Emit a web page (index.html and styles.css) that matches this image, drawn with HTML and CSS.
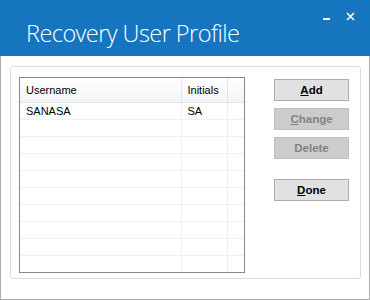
FILE: index.html
```html
<!DOCTYPE html>
<html lang="en">
<head>
  <meta charset="UTF-8" />
  <title>Recovery User Profile</title>
  <link rel="stylesheet" href="styles.css">
</head>
<body>
  <div class="window">
    <div class="titlebar">
      <h1>Recovery User Profile</h1>
      <div class="controls">
        <span class="ctl-min"></span>
        <svg class="ctl-close" width="9" height="9" viewBox="0 0 9 9">
          <path d="M1 1 L8 8 M8 1 L1 8" stroke="#fff" stroke-width="1.6" />
        </svg>
      </div>
    </div>

    <div class="content">
      <div class="groupbox">
        <div class="listview">
          <table>
            <thead>
              <tr>
                <th class="c-name">Username</th>
                <th class="c-init">Initials</th>
                <th class="c-pad"></th>
              </tr>
            </thead>
            <tbody>
              <tr><td>SANASA</td><td>SA</td><td></td></tr>
              <tr><td></td><td></td><td></td></tr>
              <tr><td></td><td></td><td></td></tr>
              <tr><td></td><td></td><td></td></tr>
              <tr><td></td><td></td><td></td></tr>
              <tr><td></td><td></td><td></td></tr>
              <tr><td></td><td></td><td></td></tr>
              <tr><td></td><td></td><td></td></tr>
              <tr><td></td><td></td><td></td></tr>
              <tr><td></td><td></td><td></td></tr>
            </tbody>
          </table>
        </div>

        <div class="buttons">
          <button class="btn"><u>A</u>dd</button>
          <button class="btn" disabled><u>C</u>hange</button>
          <button class="btn" disabled>Delete</button>
          <button class="btn btn-done"><u>D</u>one</button>
        </div>
      </div>
    </div>
  </div>
</body>
</html>
```

FILE: styles.css
```css
body {
  margin: 0;
  background: #fff;
  font-family: 'Liberation Sans', Arial, sans-serif;
}

.window {
  width: 370px;
  height: 300px;
  box-sizing: border-box;
  border: 1px solid #acacac;
  border-top: none;
  background: #fff;
}

.titlebar {
  height: 56px;
  margin: 0 -1px;
  background: #1675bf;
  position: relative;
}

.titlebar h1 {
  margin: 0;
  padding: 19px 0 0 26px;
  font-family: 'Open Sans', 'Noto Sans', sans-serif;
  font-weight: 300;
  font-size: 23.5px;
  line-height: 28px;
  color: #fff;
  letter-spacing: -0.55px;
}

.controls {
  position: absolute;
  top: 12px;
  right: 15px;
  display: flex;
  align-items: flex-start;
  gap: 16px;
}

.ctl-min {
  display: block;
  width: 7px;
  height: 2px;
  margin-top: 6px;
  background: #fff;
}

.ctl-close {
  display: block;
}

.content {
  padding: 10px 8px 0 9px;
}

.groupbox {
  height: 213px;
  box-sizing: border-box;
  border: 1px solid #d5dfe5;
  border-radius: 3px;
  padding: 10px 11px 0 8px;
  display: flex;
  gap: 29px;
}

.listview {
  width: 226px;
  height: 196px;
  box-sizing: border-box;
  border: 1px solid #828790;
  overflow: hidden;
}

table {
  width: 224px;
  border-collapse: collapse;
  table-layout: fixed;
  font-size: 11px;
  color: #000;
}

th {
  height: 24px;
  padding: 0 0 0 6px;
  text-align: left;
  font-weight: normal;
  background: linear-gradient(#ffffff, #f3f4f6);
  border-bottom: 1px solid #e5e5e5;
  border-right: 1px solid #e5e5e5;
  box-sizing: border-box;
}

.c-name { width: 161px; }
.c-init { width: 46px; }
.c-pad { border-right: none; }

td {
  height: 17px;
  padding: 0 0 0 6px;
  box-sizing: border-box;
  border-bottom: 1px solid #f0f0f0;
  border-right: 1px solid #f0f0f0;
  white-space: nowrap;
}

td:last-child {
  border-right: none;
}

tbody tr:last-child td {
  border-bottom: none;
}

.buttons {
  display: flex;
  flex-direction: column;
  gap: 7px;
  padding-top: 2px;
}

.btn {
  width: 75px;
  height: 22px;
  padding: 0;
  background: #e1e1e1;
  border: 1px solid #adadad;
  font-family: 'Liberation Sans', Arial, sans-serif;
  font-weight: bold;
  font-size: 11.5px;
  color: #000;
}

.btn:disabled {
  background: #cccccc;
  border-color: #bfbfbf;
  color: #838383;
}

.btn-done {
  margin-top: 13px;
}
```
